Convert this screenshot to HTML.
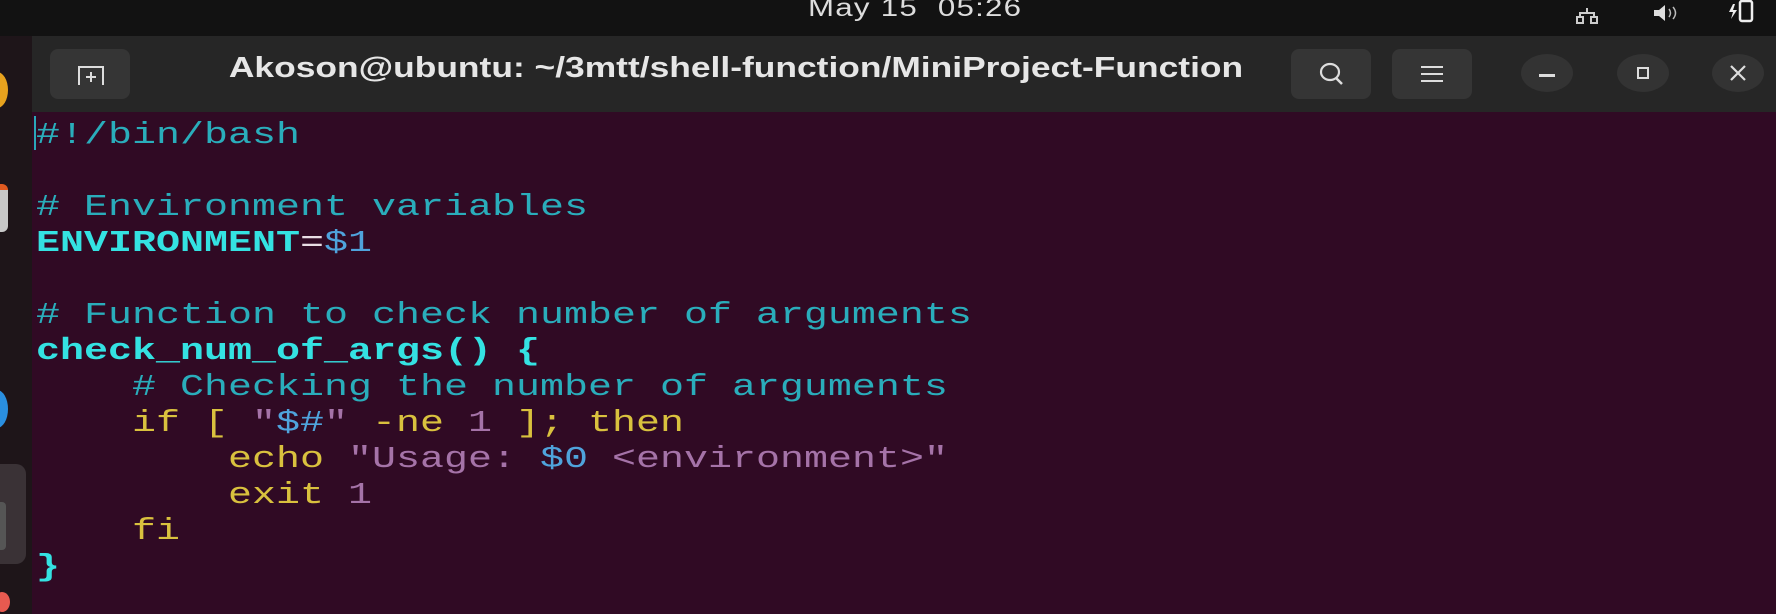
<!DOCTYPE html>
<html><head><meta charset="utf-8"><style>
*{margin:0;padding:0;box-sizing:border-box}
body{width:1776px;height:614px;overflow:hidden;background:#300a24;position:relative;font-family:"Liberation Sans",sans-serif}
#top{position:absolute;left:0;top:0;width:1776px;height:36px;background:#121212}
#clock{position:absolute;left:808px;top:-6px;color:#ddd;font-size:25px;letter-spacing:1px;white-space:pre;transform:scaleX(1.25);transform-origin:0 0}
#dock{position:absolute;left:0;top:36px;width:32px;height:578px;background:#1e1519}
#hdr{position:absolute;left:32px;top:36px;width:1744px;height:76px;background:#262626}
.btn{position:absolute;top:13px;height:50px;width:80px;background:#353535;border-radius:8px}
.circ{position:absolute;top:18px;width:52px;height:38px;border-radius:50%;background:#333}
#title{position:absolute;left:0;width:1408px;top:16px;text-align:center;color:#e6e6e6;font-weight:bold;font-size:29px;transform:scaleX(1.22);transform-origin:704px 0;white-space:nowrap}
#code{position:absolute;left:36px;top:118px;font-family:"Liberation Mono",monospace;font-size:31px;line-height:36px;white-space:pre;transform:scaleX(1.29);transform-origin:0 0;color:#2aadbb}
.b{font-weight:bold;color:#34e2e2}.y{color:#d9c13e}.p{color:#a573a8}.bl{color:#4fa3dc}.w{color:#e8dde4}
</style></head><body>
<div id="top"><div id="clock">May 15  05:26</div>
<svg style="position:absolute;left:1576px;top:4px" width="24" height="20"><g fill="none" stroke="#ccc" stroke-width="2"><rect x="1" y="13" width="6" height="6"/><rect x="15" y="13" width="6" height="6"/><path d="M4 13V9H18V13M11 9V4"/></g></svg>
<svg style="position:absolute;left:1652px;top:2px" width="30" height="22"><path d="M2 8h5l6-5v16l-6-5H2z" fill="#ddd"/><path d="M17 7q3 4 0 8M21 5q5 6 0 12" stroke="#bbb" stroke-width="1.5" fill="none"/></svg>
<svg style="position:absolute;left:1728px;top:0" width="28" height="26"><path d="M5 4l-4 8h4l-2 7 6-9H5l2-6z" fill="#eee"/><rect x="12" y="1" width="12" height="20" rx="2" fill="none" stroke="#eee" stroke-width="2.5"/></svg>
</div>
<div id="dock">
<div style="position:absolute;left:-14px;top:36px;width:22px;height:36px;border-radius:50%;background:#e8a21e"></div>
<div style="position:absolute;left:-10px;top:148px;width:18px;height:48px;border-radius:6px;background:#c8c8c8;border-top:6px solid #e05a20"></div>
<div style="position:absolute;left:-14px;top:354px;width:22px;height:38px;border-radius:50%;background:#2a8fe0"></div>
<div style="position:absolute;left:-10px;top:428px;width:36px;height:100px;border-radius:10px;background:#3a3236"></div>
<div style="position:absolute;left:-6px;top:466px;width:12px;height:48px;border-radius:4px;background:#555"></div>
<div style="position:absolute;left:-6px;top:556px;width:16px;height:20px;border-radius:50%;background:#e85a50"></div>
</div>
<div id="hdr">
<div class="btn" style="left:18px">
<svg style="position:absolute;left:26px;top:15px" width="30" height="22"><path d="M3 21V3H27V21" fill="none" stroke="#ddd" stroke-width="2"/><path d="M15 8v10M10 13h10" stroke="#ddd" stroke-width="2"/></svg></div>
<div id="title">Akoson@ubuntu: ~/3mtt/shell-function/MiniProject-Function</div>
<div class="btn" style="left:1259px"><svg style="position:absolute;left:26px;top:12px" width="30" height="28"><ellipse cx="13" cy="11" rx="9" ry="8" fill="none" stroke="#ddd" stroke-width="2.2"/><path d="M19 17l6 6" stroke="#ddd" stroke-width="2.5"/></svg></div>
<div class="btn" style="left:1360px"><svg style="position:absolute;left:27px;top:15px" width="26" height="20"><path d="M2 3h22M2 10h22M2 17h22" stroke="#ddd" stroke-width="2"/></svg></div>
<div class="circ" style="left:1489px"><div style="position:absolute;left:18px;top:20px;width:16px;height:3px;background:#ddd"></div></div>
<div class="circ" style="left:1585px"><div style="position:absolute;left:20px;top:13px;width:12px;height:12px;border:2px solid #ddd"></div></div>
<div class="circ" style="left:1680px"><svg style="position:absolute;left:16px;top:9px" width="20" height="20"><path d="M3 3l14 14M17 3L3 17" stroke="#ddd" stroke-width="2.2"/></svg></div>
</div>
<div style="position:absolute;left:34px;top:116px;width:2px;height:34px;background:#2aa7b8"></div>
<div id="code">#!/bin/bash

# Environment variables
<span class="b">ENVIRONMENT</span><span class="w">=</span><span class="bl">$1</span>

# Function to check number of arguments
<span class="b">check_num_of_args() {</span>
    # Checking the number of arguments
    <span class="y">if [ </span><span class="p">"</span><span class="bl">$#</span><span class="p">"</span><span class="y"> -ne </span><span class="p">1</span><span class="y"> ]; then</span>
        <span class="y">echo</span> <span class="p">"Usage: </span><span class="bl">$0</span><span class="p"> &lt;environment&gt;"</span>
        <span class="y">exit</span> <span class="p">1</span>
    <span class="y">fi</span>
<span class="b">}</span></div>
</body></html>
